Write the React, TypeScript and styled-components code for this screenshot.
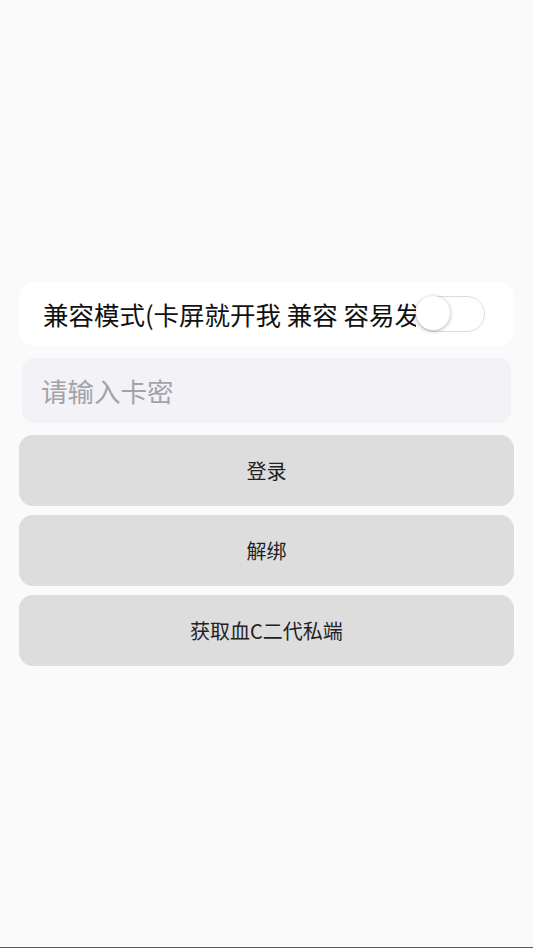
import React, { useState } from "react";
import styled, { createGlobalStyle } from "styled-components";

const GlobalStyle = createGlobalStyle`
  html, body {
    margin: 0;
    padding: 0;
    background: #fafafa;
    font-family: "Noto Sans CJK SC", "Noto Sans", sans-serif;
  }
  * {
    box-sizing: border-box;
  }
`;

const PageStyled = styled.div`
  height: 948px;
  display: flex;
  flex-direction: column;
  justify-content: center;
  padding: 0 19px;
  background: #fafafa;
  border-bottom: 1px solid #5a5a5a;
`;

const CardStyled = styled.div`
  display: flex;
  align-items: center;
  height: 64px;
  padding: 0 29px 0 24px;
  background: #ffffff;
  border-radius: 16px;
  margin-bottom: 12px;
`;

const LabelStyled = styled.span`
  flex: 1;
  min-width: 0;
  overflow: hidden;
  white-space: nowrap;
  font-size: 25.5px;
  color: #111111;
`;

const SwitchTrack = styled.button<{ $on: boolean }>`
  position: relative;
  flex-shrink: 0;
  width: 69px;
  height: 36px;
  padding: 0;
  border-radius: 18px;
  border: 1.5px solid #dcdcdc;
  background: ${(p) => (p.$on ? "#34c759" : "#ffffff")};
  cursor: pointer;
`;

const SwitchKnob = styled.span<{ $on: boolean }>`
  position: absolute;
  top: -0.5px;
  left: ${(p) => (p.$on ? "33px" : "-1px")};
  width: 34px;
  height: 34px;
  border-radius: 50%;
  background: #ffffff;
  box-shadow: 0 1px 4px rgba(0, 0, 0, 0.3);
  transition: left 0.2s;
`;

const InputStyled = styled.input`
  height: 65px;
  margin: 0 3px 12px;
  padding: 0 19px;
  border: none;
  outline: none;
  border-radius: 12px;
  background: #f2f2f7;
  font-family: inherit;
  font-size: 26.5px;
  color: #111111;
  &::placeholder {
    color: #a3a3a8;
  }
`;

const ButtonStyled = styled.button`
  height: 71px;
  margin-bottom: 9px;
  border: none;
  border-radius: 14px;
  background: #dddddd;
  font-family: inherit;
  font-size: 20px;
  color: #222222;
  cursor: pointer;
  &:last-child {
    margin-bottom: 0;
  }
`;

const App = () => {
  const [compat, setCompat] = useState(false);
  const [key, setKey] = useState("");

  return (
    <>
      <GlobalStyle />
      <PageStyled>
        <CardStyled>
          <LabelStyled>兼容模式(卡屏就开我 兼容 容易发热)</LabelStyled>
          <SwitchTrack $on={compat} onClick={() => setCompat(!compat)}>
            <SwitchKnob $on={compat} />
          </SwitchTrack>
        </CardStyled>
        <InputStyled
          placeholder="请输入卡密"
          value={key}
          onChange={(e) => setKey(e.target.value)}
        />
        <ButtonStyled>登录</ButtonStyled>
        <ButtonStyled>解绑</ButtonStyled>
        <ButtonStyled>获取血C二代私端</ButtonStyled>
      </PageStyled>
    </>
  );
};

export default App;
